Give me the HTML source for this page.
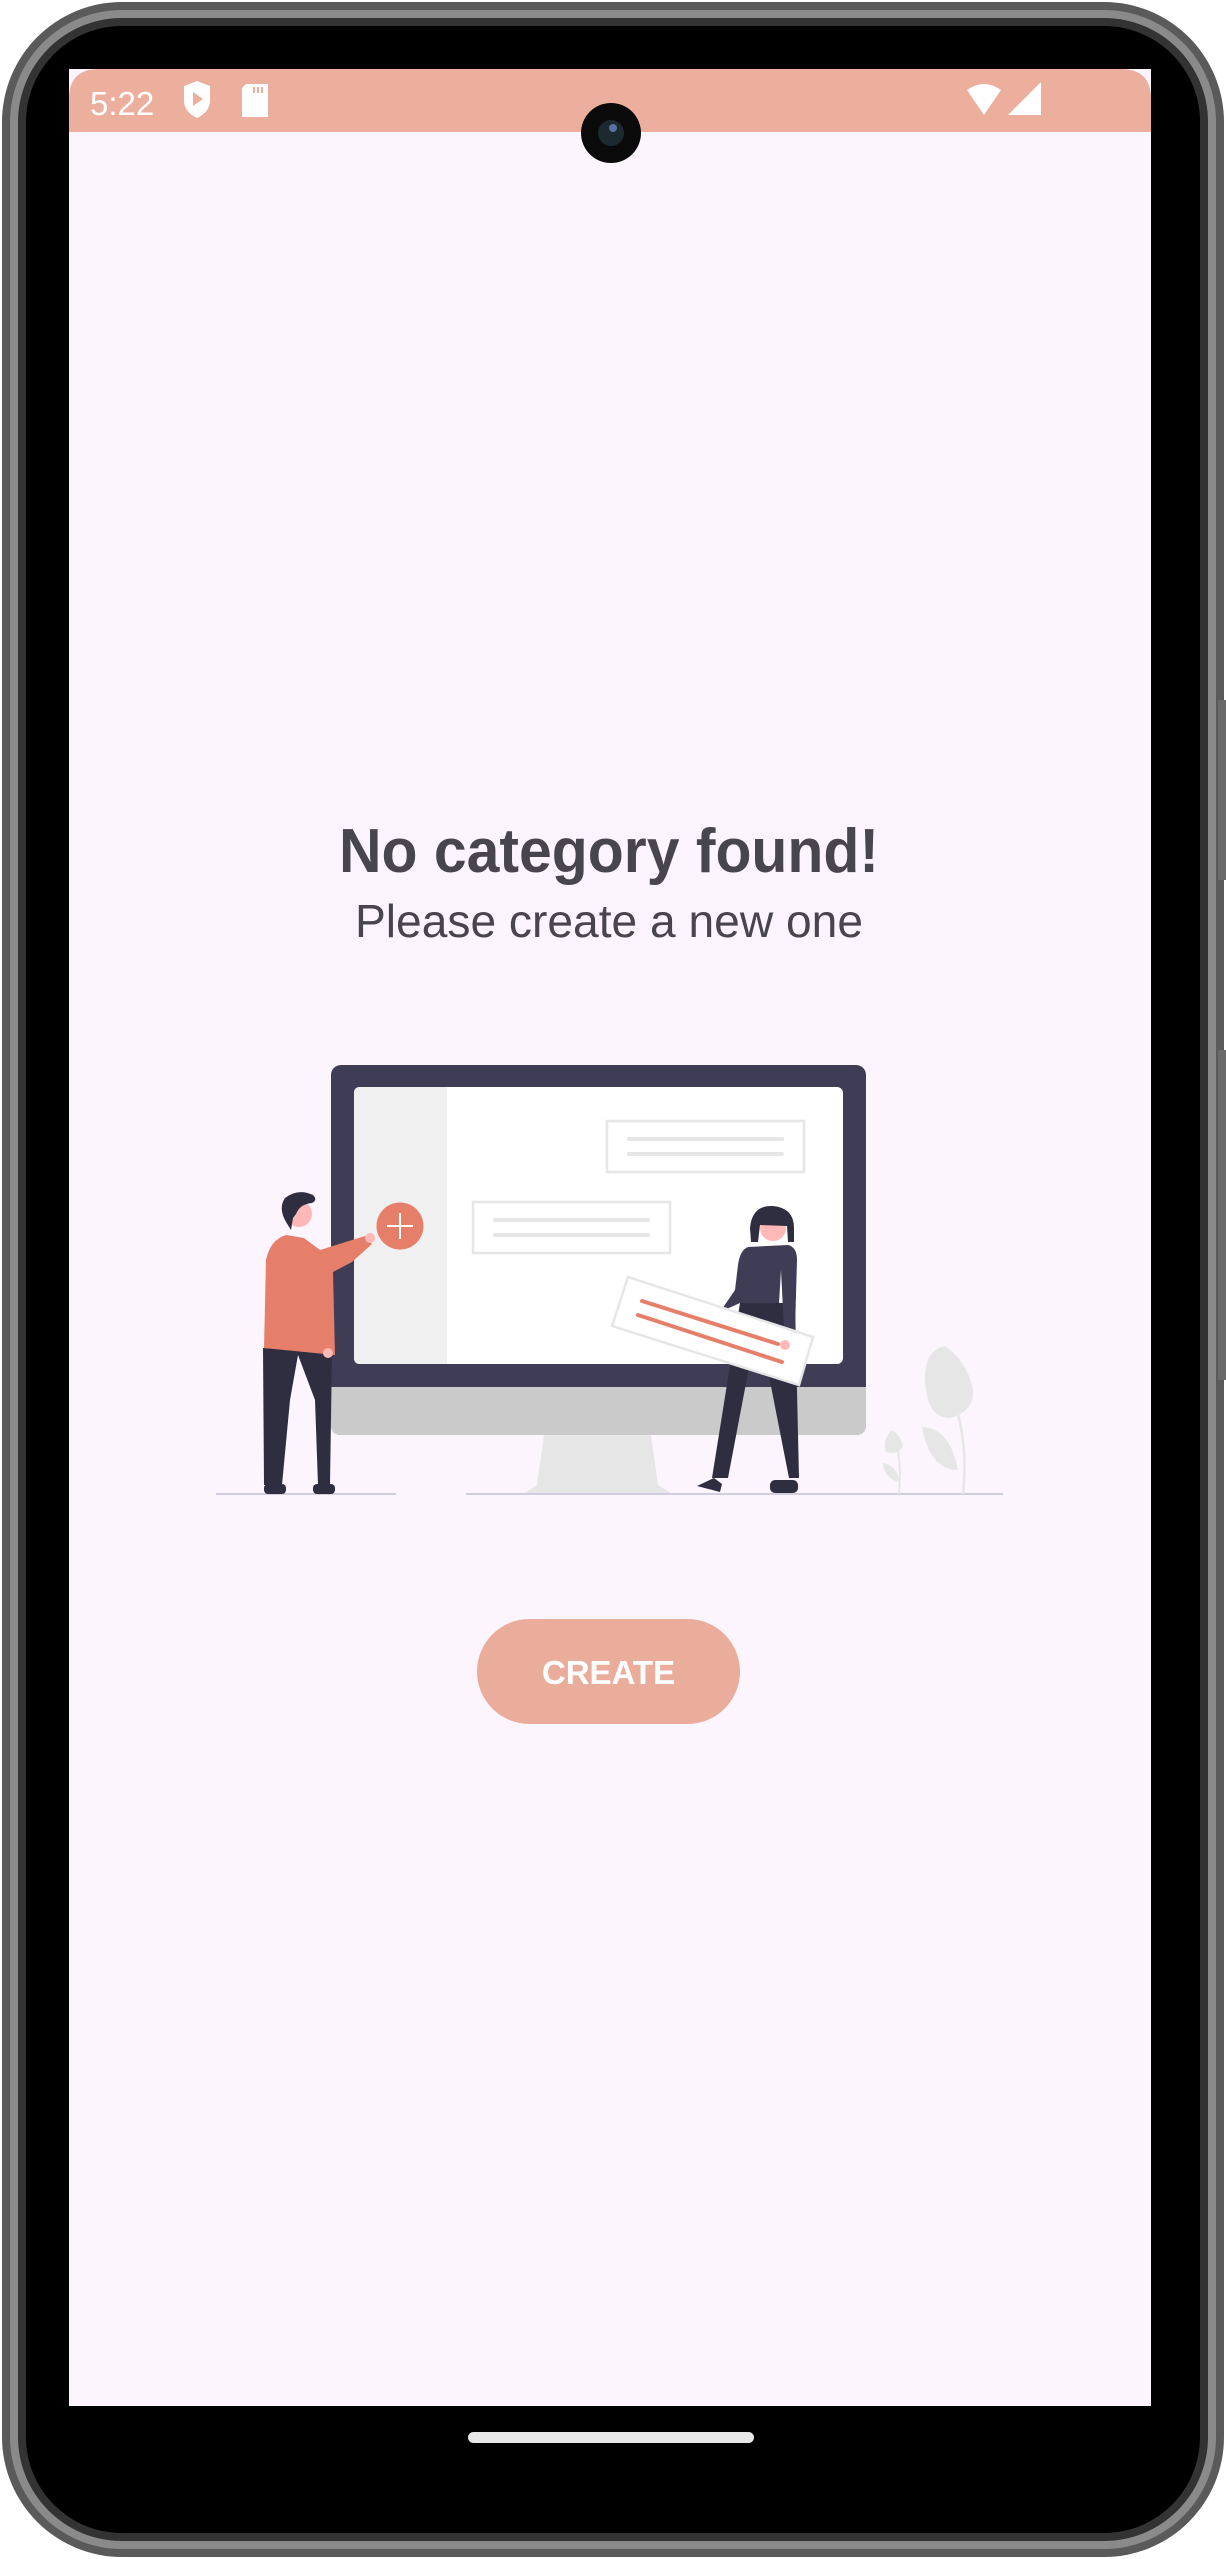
<!DOCTYPE html>
<html><head><meta charset="utf-8"><style>
html,body{margin:0;padding:0;background:#fff;}
svg{display:block;}
</style></head><body>
<svg width="1226" height="2559" viewBox="0 0 1226 2559" xmlns="http://www.w3.org/2000/svg">
<!-- phone frame -->
<rect x="2" y="2" width="1222" height="2555" rx="120" fill="#5a5a5a"/>
<rect x="10" y="10" width="1206" height="2539" rx="112" fill="#8a8a8a"/>
<rect x="18" y="18" width="1190" height="2523" rx="104" fill="#333"/>
<rect x="26" y="26" width="1174" height="2507" rx="96" fill="#000"/>
<rect x="1218" y="700" width="8" height="180" fill="#6a6a6a"/>
<rect x="1218" y="1050" width="8" height="330" fill="#6a6a6a"/>
<!-- screen -->
<rect x="69" y="69" width="1082" height="2337" fill="#fcf5fd"/>
<path d="M69 132 V99 Q69 69 99 69 H1121 Q1151 69 1151 99 V132 Z" fill="#ecae9d"/>
<!-- status bar -->
<text x="90" y="115" font-family="Liberation Sans, sans-serif" font-size="33" fill="#fff">5:22</text>
<path d="M184 86 L197 81 L210 86 V100 Q210 112 197 118 Q184 112 184 100 Z" fill="#fff"/>
<path d="M193 92 L203 99 L193 106 Z" fill="#ecae9d"/>
<path d="M246 84 H268 V117 H242 V88 Z" fill="#fff"/>
<rect x="253" y="87" width="2" height="6" fill="#ecae9d"/><rect x="257" y="87" width="2" height="6" fill="#ecae9d"/><rect x="261" y="87" width="2" height="6" fill="#ecae9d"/>
<path d="M967 90 Q984 78 1001 90 L984 115 Z" fill="#fff"/>
<path d="M1041 82 V115 H1008 Z" fill="#fff"/>
<!-- camera -->
<circle cx="611" cy="133" r="30" fill="#0a0a0a"/>
<circle cx="611" cy="133" r="13" fill="#1c2a30"/>
<circle cx="613" cy="128" r="4" fill="#5b6fa0"/>
<!-- text -->
<text x="609" y="872" text-anchor="middle" font-family="Liberation Sans, sans-serif" font-weight="bold" font-size="62" fill="#49454f" textLength="540" lengthAdjust="spacingAndGlyphs">No category found!</text>
<text x="609" y="937" text-anchor="middle" font-family="Liberation Sans, sans-serif" font-size="46" fill="#49454f" textLength="508" lengthAdjust="spacingAndGlyphs">Please create a new one</text>
<!-- illustration -->
<rect x="331" y="1065" width="535" height="370" rx="10" fill="#3f3d56"/>
<path d="M331 1387 H866 V1425 Q866 1435 856 1435 H341 Q331 1435 331 1425 Z" fill="#cacaca"/>
<rect x="354" y="1087" width="489" height="277" rx="6" fill="#fff"/>
<path d="M360 1087 H447 V1364 H360 Q354 1364 354 1358 V1093 Q354 1087 360 1087 Z" fill="#f0f0f0"/>
<path d="M544 1435 H651 L658 1485 L671 1493 H525 L537 1485 Z" fill="#e6e6e6"/>
<rect x="607" y="1121" width="197" height="51" fill="none" stroke="#e6e6e6" stroke-width="2.5"/>
<line x1="629" y1="1139" x2="782" y2="1139" stroke="#e6e6e6" stroke-width="4" stroke-linecap="round"/>
<line x1="629" y1="1154" x2="782" y2="1154" stroke="#e6e6e6" stroke-width="4" stroke-linecap="round"/>
<rect x="473" y="1202" width="197" height="51" fill="none" stroke="#e6e6e6" stroke-width="2.5"/>
<line x1="495" y1="1220" x2="648" y2="1220" stroke="#e6e6e6" stroke-width="4" stroke-linecap="round"/>
<line x1="495" y1="1235" x2="648" y2="1235" stroke="#e6e6e6" stroke-width="4" stroke-linecap="round"/>
<!-- ground -->
<line x1="216" y1="1494" x2="396" y2="1494" stroke="#d0cde1" stroke-width="2"/>
<line x1="466" y1="1494" x2="1003" y2="1494" stroke="#d0cde1" stroke-width="2"/>
<!-- plants -->
<path d="M963 1494 Q968 1450 957 1410" stroke="#e6e6e6" stroke-width="2.5" fill="none"/>
<path d="M945 1346 Q926 1350 925 1375 Q925 1418 950 1418 Q978 1410 972 1385 Q965 1360 945 1346 Z" fill="#e6e6e6"/>
<path d="M922 1427 Q950 1428 958 1470 Q930 1470 922 1427 Z" fill="#e6e6e6"/>
<path d="M899 1494 Q901 1470 898 1450" stroke="#e6e6e6" stroke-width="2" fill="none"/>
<path d="M892 1430 Q882 1440 886 1452 Q900 1455 903 1445 Q900 1435 892 1430 Z" fill="#e6e6e6"/>
<path d="M883 1463 Q884 1478 899 1482 Q898 1466 883 1463 Z" fill="#e6e6e6"/>
<!-- man -->
<path d="M263 1348 L332 1352 L330 1485 L318 1485 L315 1400 L298 1355 L290 1400 L282 1485 L264 1485 Z" fill="#2f2e41"/>
<rect x="264" y="1484" width="22" height="10" rx="4" fill="#2f2e41"/>
<rect x="313" y="1484" width="22" height="10" rx="4" fill="#2f2e41"/>
<path d="M286 1235 L304 1238 L320 1250 L365 1236 L372 1244 L352 1262 L333 1272 L335 1355 L264 1348 L266 1260 Q270 1240 286 1235 Z" fill="#e57f6a"/>
<circle cx="299" cy="1214" r="13" fill="#ffb8b8"/>
<path d="M286 1222 Q278 1208 285 1198 Q298 1188 313 1195 Q318 1200 312 1203 Q300 1204 296 1214 L293 1218 L291 1230 Z" fill="#2f2e41"/>
<circle cx="328" cy="1353" r="5" fill="#ffb8b8"/>
<circle cx="370" cy="1238" r="5" fill="#ffb8b8"/>
<circle cx="400" cy="1226" r="23.5" fill="#e57f6a"/>
<line x1="400" y1="1213" x2="400" y2="1239" stroke="#fff" stroke-width="2"/>
<line x1="387" y1="1226" x2="413" y2="1226" stroke="#fff" stroke-width="2"/>
<!-- woman -->
<path d="M740 1303 L795 1303 L799 1478 L789 1478 L758 1320 L728 1478 L712 1478 Z" fill="#2f2e41"/>
<path d="M697 1486 L714 1478 L722 1484 L720 1492 Z" fill="#2f2e41"/>
<rect x="770" y="1480" width="28" height="13" rx="5" fill="#2f2e41"/>
<path d="M748 1247 L788 1245 Q797 1247 797 1260 L795 1330 L784 1330 L781 1270 L779 1303 L740 1303 L720 1312 L735 1290 L738 1265 Q740 1250 748 1247 Z" fill="#3f3d56"/>
<circle cx="773" cy="1228" r="13" fill="#ffb8b8"/>
<path d="M750 1228 Q752 1205 773 1206 Q794 1208 794 1228 V1242 H788 L787 1226 L760 1225 L758 1242 H751 Z" fill="#2f2e41"/>
<path d="M628 1277 L813 1337 L799 1385 L612 1326 Z" fill="#fff" stroke="#e6e6e6" stroke-width="2.5"/>
<line x1="642" y1="1301" x2="778" y2="1344" stroke="#e57f6a" stroke-width="4" stroke-linecap="round"/>
<line x1="638" y1="1315" x2="782" y2="1362" stroke="#e57f6a" stroke-width="4" stroke-linecap="round"/>
<circle cx="785" cy="1345" r="5" fill="#ffb8b8"/>
<!-- button -->
<rect x="477" y="1619" width="263" height="105" rx="52.5" fill="#eaad9c"/>
<text x="608.5" y="1684" text-anchor="middle" font-family="Liberation Sans, sans-serif" font-weight="bold" font-size="33" fill="#fff">CREATE</text>
<!-- home bar -->
<rect x="468" y="2432" width="286" height="11" rx="5.5" fill="#e8e8e8"/>
</svg>
</body></html>
